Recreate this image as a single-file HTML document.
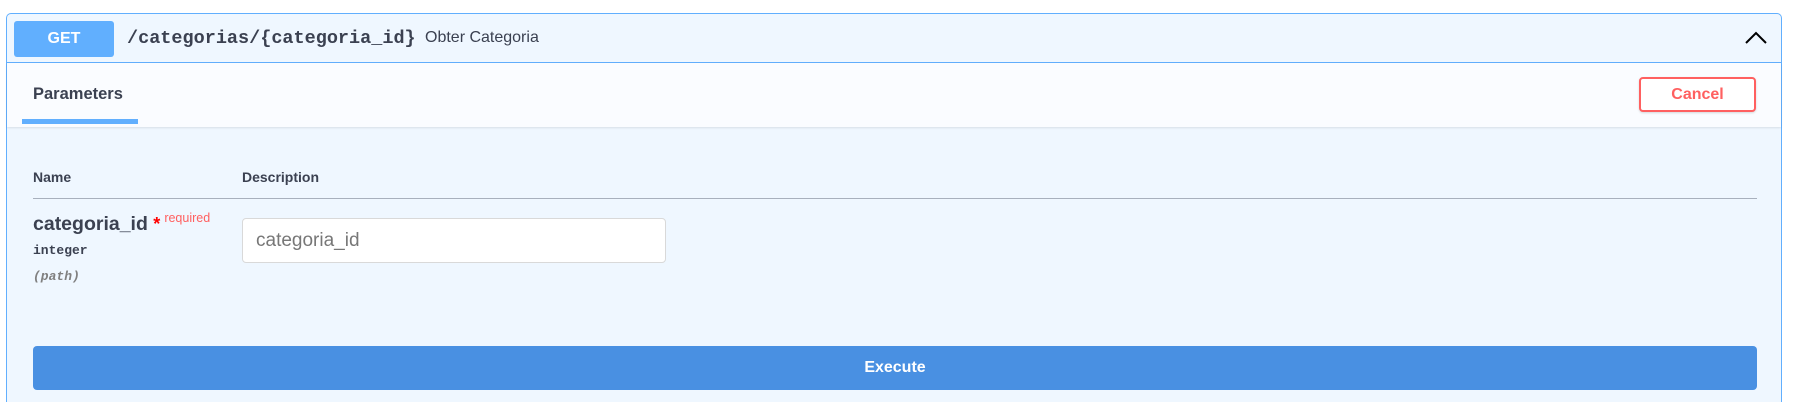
<!DOCTYPE html>
<html><head><meta charset="utf-8"><style>
*{box-sizing:border-box;margin:0;padding:0}
html,body{width:1818px;height:402px;overflow:hidden}
body{background:#fff;font-family:"Liberation Sans",sans-serif;color:#3b4151;position:relative}
.card{position:absolute;left:6px;top:13px;width:1776px;height:389px;border:1px solid #61affe;border-bottom:none;border-radius:5px 5px 0 0;background:#eff7ff}
.hdr{position:absolute;left:0;top:0;width:100%;height:49px;border-bottom:1px solid #61affe}
.get{position:absolute;left:7px;top:7px;width:100px;height:36px;background:#61affe;border-radius:3px;color:#fff;font-weight:bold;font-size:16px;text-align:center;line-height:36px}
.path{position:absolute;left:120px;top:14px;font-family:"Liberation Mono",monospace;font-weight:bold;font-size:18.5px;color:#3b4151}
.desc{position:absolute;left:418px;top:15px;font-size:16px;color:#3b4151}
.chev{position:absolute;right:14px;top:14px}
.tabs{position:absolute;left:0;top:49px;width:100%;height:64px;background:#fafcff;box-shadow:0 1px 2px rgba(0,0,0,.1)}
.tab{position:absolute;left:26px;top:22px;font-weight:bold;font-size:16.5px}
.ul{position:absolute;left:15px;top:56px;width:116px;height:5px;background:#61affe}
.cancel{position:absolute;left:1632px;top:14px;width:117px;height:35px;border:2px solid #ff6060;border-radius:4px;background:#fff;color:#ff6060;font-weight:bold;font-size:16px;text-align:center;line-height:31px;box-shadow:0 1px 2px rgba(0,0,0,.15)}
.th{position:absolute;top:155px;font-weight:bold;font-size:14px}
.line{position:absolute;left:26px;top:184px;width:1724px;height:1px;background:#a8b0bd}
.pn{position:absolute;left:26px;top:197px;font-weight:bold;font-size:19.5px}
.pn .s{color:red;font-size:18px;vertical-align:0px}
.pn .r{color:#ff6060;font-size:12.5px;font-weight:normal;vertical-align:8px;margin-left:4px}
.ty{position:absolute;left:26px;top:229px;font-family:"Liberation Mono",monospace;font-weight:bold;font-size:13px}
.in{position:absolute;left:26px;top:255px;font-family:"Liberation Mono",monospace;font-style:italic;font-weight:bold;font-size:13px;color:#808080}
.inp{position:absolute;left:235px;top:204px;width:424px;height:45px;border:1px solid #d9d9d9;border-radius:4px;background:#fff;font-size:19px;color:#777;padding:11px 13px}
.exe{position:absolute;left:26px;top:332px;width:1724px;height:44px;background:#4990e2;border-radius:4px;color:#fff;font-weight:bold;font-size:16px;text-align:center;line-height:44px}
</style></head><body>
<div class="card">
 <div class="hdr">
  <div class="get">GET</div>
  <div class="path">/categorias/{categoria_id}</div>
  <div class="desc">Obter Categoria</div>
  <svg class="chev" width="22" height="20" viewBox="0 0 22 20"><path d="M1 15 L11 5 L21 15" fill="none" stroke="#000" stroke-width="2"/></svg>
 </div>
 <div class="tabs">
  <div class="tab">Parameters</div>
  <div class="ul"></div>
  <div class="cancel">Cancel</div>
 </div>
 <div class="th" style="left:26px">Name</div>
 <div class="th" style="left:235px">Description</div>
 <div class="line"></div>
 <div class="pn">categoria_id <span class="s">*</span><span class="r">required</span></div>
 <div class="ty">integer</div>
 <div class="in">(path)</div>
 <div class="inp">categoria_id</div>
 <div class="exe">Execute</div>
</div>
</body></html>
